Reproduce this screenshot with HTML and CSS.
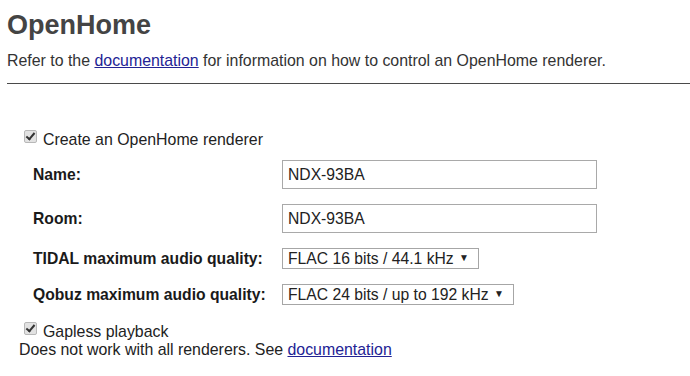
FILE: index.html
```html
<!DOCTYPE html>
<html>
<head>
<meta charset="utf-8">
<link rel="stylesheet" href="styles.css">
</head>
<body>
<div class="page">
  <h1 class="title">OpenHome</h1>
  <p class="intro">Refer to the <a href="#">documentation</a> for information on how to control an OpenHome renderer.</p>
  <hr class="rule">
  <div class="section">
    <label class="check-row"><input type="checkbox" class="check" checked> Create an OpenHome renderer</label>
    <div class="fields">
      <label class="field-label" for="name">Name:</label>
      <input id="name" class="text-input" type="text" value="NDX-93BA">
      <label class="field-label" for="room">Room:</label>
      <input id="room" class="text-input" type="text" value="NDX-93BA">
      <label class="field-label" for="tidal">TIDAL maximum audio quality:</label>
      <span class="select-wrap"><select id="tidal" class="select"><option>FLAC 16 bits / 44.1 kHz</option></select></span>
      <label class="field-label" for="qobuz">Qobuz maximum audio quality:</label>
      <span class="select-wrap"><select id="qobuz" class="select"><option>FLAC 24 bits / up to 192 kHz</option></select></span>
    </div>
    <label class="check-row gapless"><input type="checkbox" class="check" checked> Gapless playback</label>
    <div class="note">Does not work with all renderers. See <a href="#">documentation</a></div>
  </div>
</div>
</body>
</html>
```
FILE: styles.css
```css
html, body {
  margin: 0;
  padding: 0;
  background: #fff;
}
body {
  font-family: "Liberation Sans", Arial, sans-serif;
  color: #222;
  font-size: 15.9px;
}
.page {
  padding: 0 0 0 7px;
}
.title {
  margin: 9px 0 0;
  font-size: 27px;
  line-height: 32px;
  color: #444;
  font-weight: bold;
}
.intro {
  margin: 11px 0 0;
  line-height: 18px;
  color: #333;
}
a {
  color: #232394;
}
.rule {
  margin: 13px 0 0;
  border: 0;
  border-top: 1px solid #4a4a4a;
  height: 0;
}
.section {
  padding: 46px 0 0 12px;
}
.check-row {
  display: flex;
  align-items: center;
  gap: 6px;
  padding-left: 5px;
  line-height: 19px;
}
.check {
  appearance: none;
  -webkit-appearance: none;
  margin: 0;
  width: 13px;
  height: 13px;
  border: 1px solid #b8b8b8;
  border-radius: 2px;
  background: #e2e2e2;
  position: relative;
  top: -3px;
}
.check::after {
  content: "";
  position: absolute;
  left: 3px;
  top: 0px;
  width: 3px;
  height: 7px;
  border: solid #333;
  border-width: 0 2px 2px 0;
  transform: rotate(40deg);
}
.fields {
  display: grid;
  grid-template-columns: 249px auto;
  justify-items: start;
  align-items: center;
  row-gap: 15px;
  margin: 11px 0 0 14px;
  font-size: 15.7px;
}
.field-label {
  font-weight: bold;
  color: #1a1a1a;
}
.text-input {
  box-sizing: border-box;
  width: 315px;
  height: 29px;
  border: 1px solid #a9a9a9;
  padding: 0 5px;
  font: inherit;
  color: #222;
  margin: 0;
}
.select-wrap {
  position: relative;
  display: inline-block;
}
.select-wrap::after {
  content: "▼";
  position: absolute;
  right: 10px;
  top: 4px;
  font-size: 10px;
  color: #222;
  pointer-events: none;
}
.select {
  appearance: none;
  -webkit-appearance: none;
  box-sizing: border-box;
  height: 21px;
  border: 1px solid #a6a6a6;
  border-radius: 0;
  background: #fff;
  padding: 0 24px 0 5px;
  font: inherit;
  color: #222;
  margin: 0;
}
.gapless {
  margin-top: 17px;
}
.note {
  line-height: 18px;
  color: #222;
}
```
